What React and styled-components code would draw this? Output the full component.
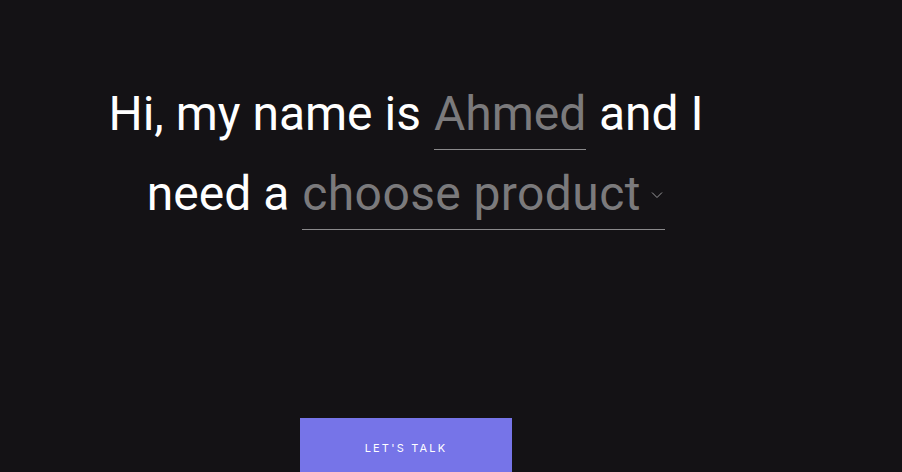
import React, { useState } from "react";
import styled, { createGlobalStyle } from "styled-components";

const GlobalStyle = createGlobalStyle`
  html, body {
    margin: 0;
    padding: 0;
    background: #141215;
    height: 100%;
    overflow: hidden;
  }
  body {
    font-family: Roboto, "Liberation Sans", Arial, sans-serif;
  }
`;

const Page = styled.div`
  width: 812px;
  padding-top: 74px;
  display: flex;
  flex-direction: column;
  align-items: center;
`;

const Sentence = styled.div`
  color: #ffffff;
  font-size: 48px;
  line-height: 80px;
  text-align: center;
  white-space: nowrap;
`;

const Line = styled.div`
  display: flex;
  justify-content: center;
  align-items: baseline;
  gap: 13px;
`;

const NameInput = styled.input`
  font: inherit;
  letter-spacing: inherit;
  color: #7b7a7c;
  background: transparent;
  border: none;
  border-bottom: 1px solid #8a898b;
  outline: none;
  width: 152px;
  padding: 0 0 6px;
  line-height: 58px;
`;

const SelectWrap = styled.div`
  display: inline-flex;
  align-items: center;
  width: 363px;
  border-bottom: 1px solid #8a898b;
  padding-bottom: 6px;
  color: #7b7a7c;
  line-height: 58px;
  letter-spacing: 0.4px;
`;

const SelectText = styled.span`
  flex: 1;
  text-align: left;
`;

const Chevron = styled.svg`
  width: 12px;
  height: 8px;
  margin-right: 2px;
  margin-top: 2px;
`;

const Button = styled.button`
  margin-top: 184px;
  width: 212px;
  height: 60px;
  background: #7674e8;
  border: none;
  color: #ffffff;
  font-family: "Inter", "Liberation Sans", sans-serif;
  font-size: 11px;
  letter-spacing: 2.2px;
  padding: 0;
`;

export default function App() {
  const [name, setName] = useState("Ahmed");
  return (
    <>
      <GlobalStyle />
      <Page>
        <Sentence>
          <Line>
            <span>Hi, my name is</span>
            <NameInput value={name} onChange={(e) => setName(e.target.value)} />
            <span>and I</span>
          </Line>
          <Line>
            <span>need a</span>
            <SelectWrap>
              <SelectText>choose product</SelectText>
              <Chevron viewBox="0 0 12 8">
                <path d="M1 1.5 L6 6.5 L11 1.5" fill="none" stroke="#9a999b" strokeWidth="1" />
              </Chevron>
            </SelectWrap>
          </Line>
        </Sentence>
        <Button>LET'S TALK</Button>
      </Page>
    </>
  );
}
